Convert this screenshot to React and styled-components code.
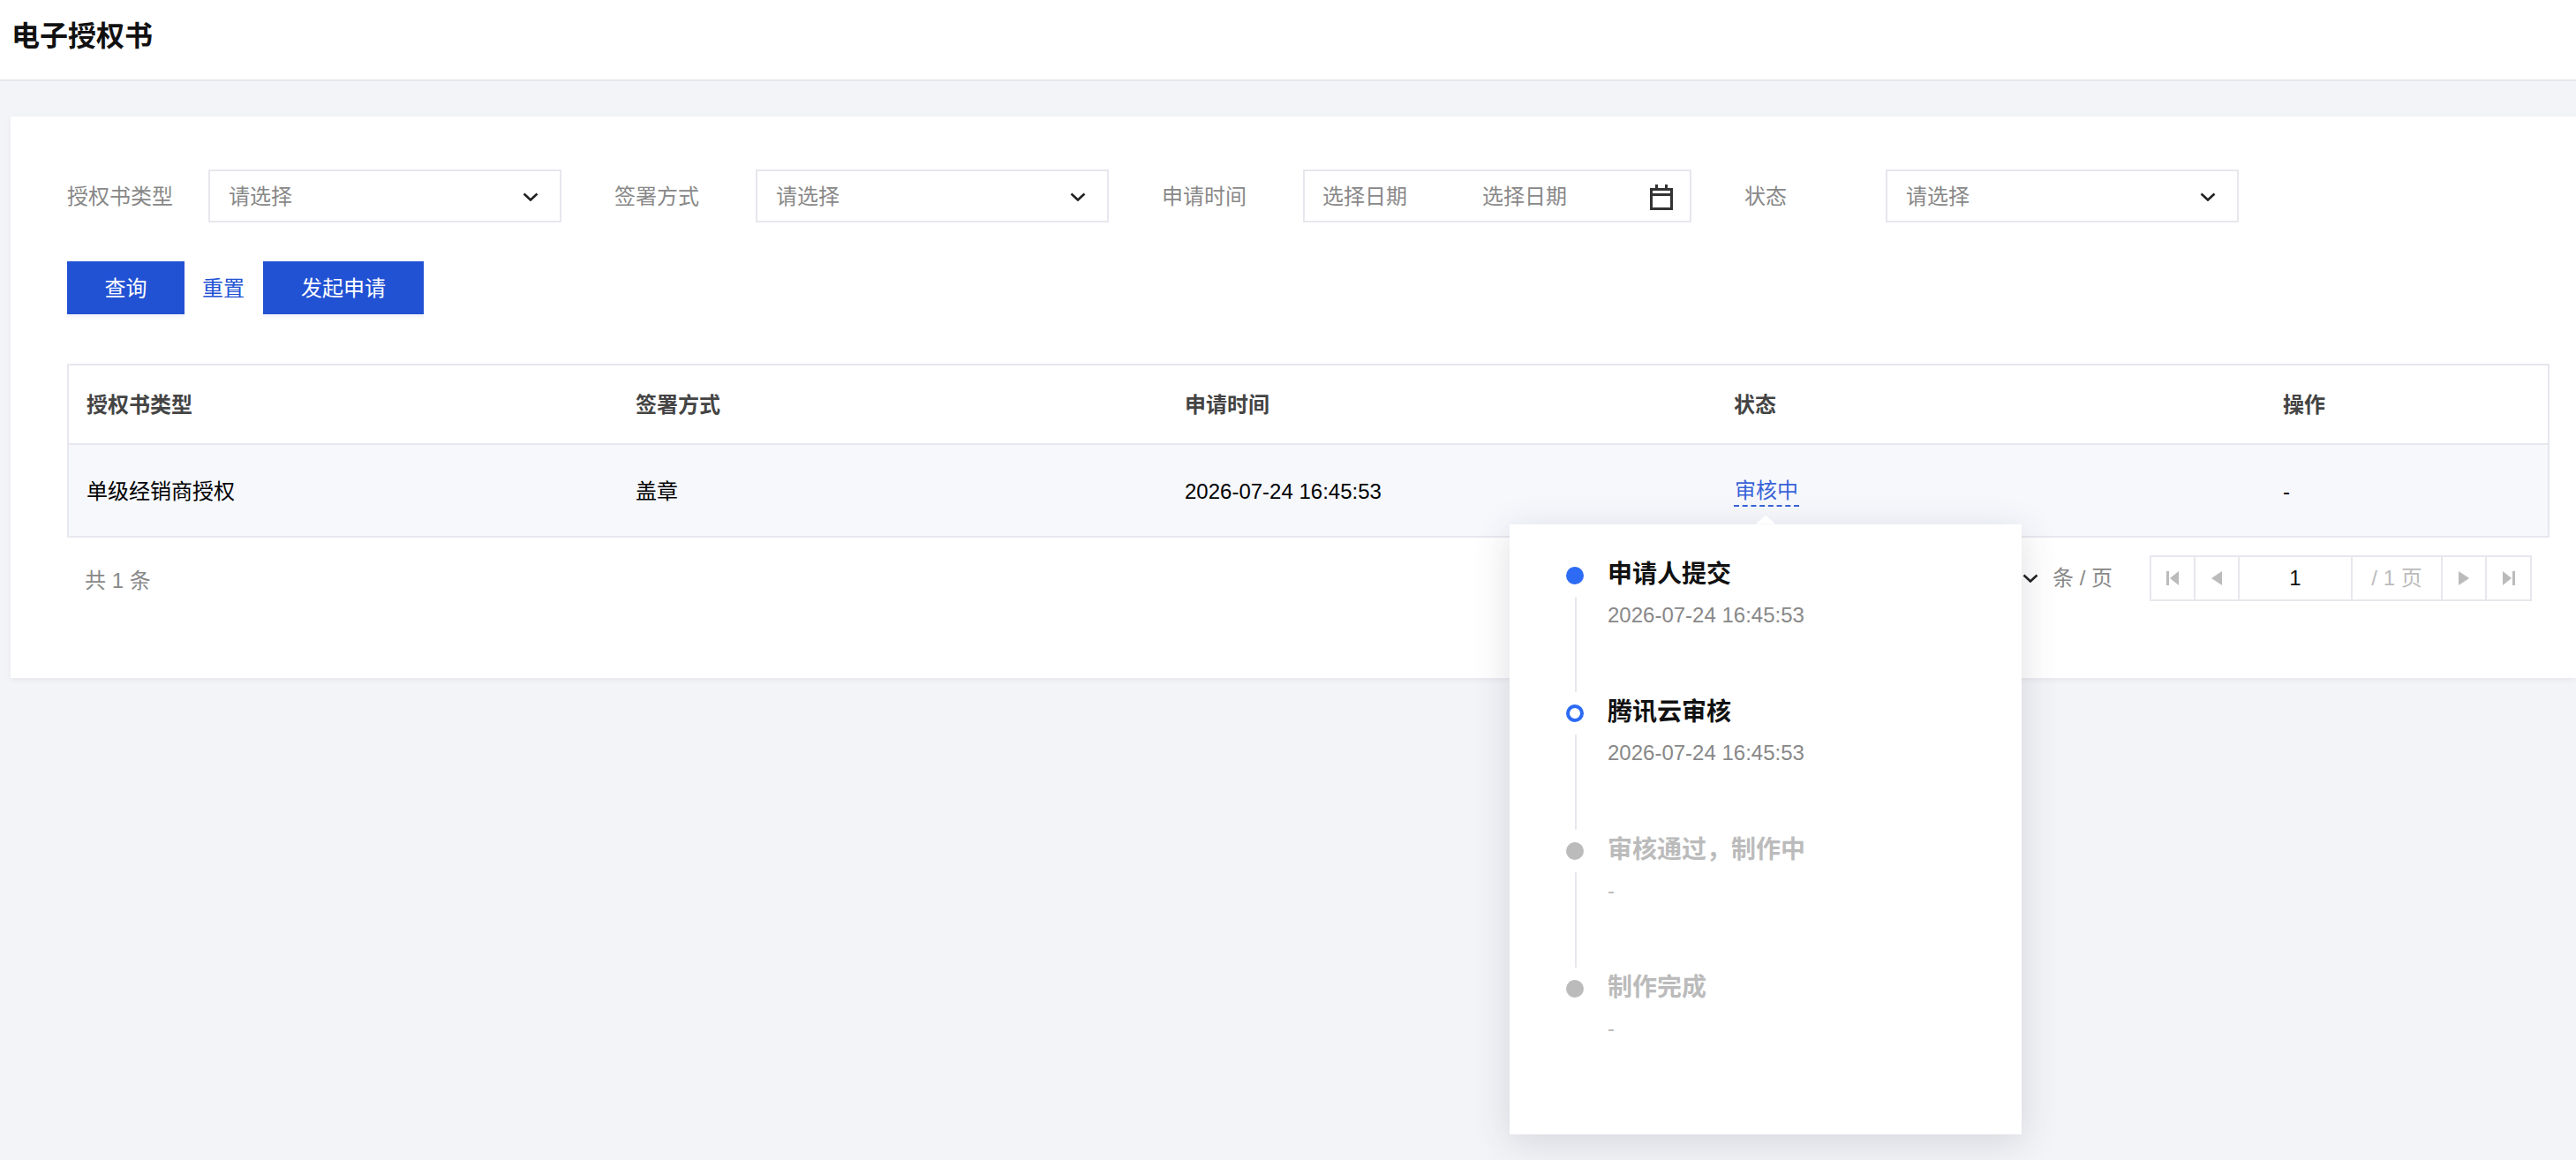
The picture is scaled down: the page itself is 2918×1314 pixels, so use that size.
import React from "react";
import styled, { createGlobalStyle } from "styled-components";

const Global = createGlobalStyle`
  html, body { margin: 0; padding: 0; background: #f3f4f7; overflow: hidden; }
  body {
    font-family: "Liberation Sans", "Noto Sans CJK SC", sans-serif;
    font-size: 24px;
    line-height: 32px;
    color: #000;
  }
  * { box-sizing: border-box; }
`;

const Page = styled.div`
  width: 2918px;
  min-height: 1314px;
  background: #f3f4f7;
`;
const Header = styled.header`
  height: 92px;
  padding-left: 13px;
  display: flex;
  align-items: center;
  background: #fff;
  border-bottom: 2px solid #e7e8ee;
`;
const Title = styled.h1`
  margin: 0 0 8px;
  font-size: 32px;
  line-height: 44px;
  font-weight: 700;
  color: #111;
`;
const Card = styled.section`
  margin: 40px 0 0 12px;
  padding: 60px 30px 87px 64px;
  background: #fff;
  box-shadow: 0 2px 6px rgba(54, 58, 80, 0.06);
`;
const Filters = styled.div`
  display: flex;
  align-items: center;
  gap: 60px;
`;
const Field = styled.div`
  display: flex;
  align-items: center;
`;
const Label = styled.label`
  width: 160px;
  padding-top: 2px;
  color: #888;
`;
const Select = styled.div`
  width: 400px;
  height: 60px;
  padding: 2px 24px 0 21px;
  display: flex;
  align-items: center;
  justify-content: space-between;
  border: 2px solid #e7e8ee;
  color: #888;
  background: #fff;
`;
const DateRange = styled(Select)`
  width: 440px;
  padding: 2px 19px 0 20px;
`;
const DateText = styled.span`
  width: 181px;
`;
const DateTexts = styled.div`
  display: flex;
`;
const Actions = styled.div`
  margin-top: 44px;
  display: flex;
  align-items: center;
`;
const Primary = styled.button`
  width: ${(p) => p.$w}px;
  height: 60px;
  padding: 2px 0 0;
  border: 0;
  border-radius: 0;
  background: #2252d4;
  color: #fff;
  font: inherit;
  box-shadow: 0 4px 0 #f7f7fd;
`;
const Link = styled.a`
  margin: 0 21px 0 20px;
  padding-top: 2px;
  color: #2252d4;
`;
const Table = styled.div`
  margin-top: 56px;
  width: 2812px;
  border: 2px solid #e7e8ee;
`;
const Row = styled.div`
  display: grid;
  grid-template-columns: repeat(4, 622px) 1fr;
  align-items: center;
  padding: ${(p) => p.$pt}px 0 0 20px;
  height: ${(p) => p.$h}px;
  background: ${(p) => p.$bg};
  color: ${(p) => p.$color};
  font-weight: ${(p) => p.$weight};
  border-bottom: ${(p) => (p.$line ? "2px solid #e7e8ee" : "0")};
`;
const Status = styled.span`
  position: relative;
  display: inline-block;
  padding: 0 1px;
  color: #3a63d8;
  border-bottom: 2px dashed #3a63d8;
`;
const Popover = styled.div`
  position: absolute;
  top: calc(100% + 22px);
  left: 50%;
  transform: translateX(-50%);
  margin-left: -1px;
  width: 580px;
  padding: 36px 0 104px 64px;
  background: #fff;
  box-shadow: 0 8px 40px rgba(54, 58, 80, 0.16);
  &::before {
    content: "";
    position: absolute;
    top: -10px;
    left: 50%;
    margin-left: -11px;
    width: 22px;
    height: 10px;
    background: #fff;
    clip-path: polygon(50% 0, 100% 100%, 0 100%);
  }
`;
const Step = styled.div`
  display: flex;
  gap: 27px;
`;
const Rail = styled.div`
  width: 20px;
  padding-top: 12px;
  flex: none;
`;
const Dot = styled.div`
  width: 20px;
  height: 20px;
  border-radius: 50%;
  background: ${(p) => (p.$state === "hollow" ? "#fff" : p.$state === "done" ? "#2d6bf5" : "#bbb")};
  border: ${(p) => (p.$state === "hollow" ? "4px solid #2d6bf5" : "0")};
`;
const RailLine = styled.div`
  width: 2px;
  height: 108px;
  margin: 14px 0 2px 10px;
  background: #e7e8ee;
`;
const StepBody = styled.div`
  padding-top: 1px;
`;
const StepTitle = styled.div`
  font-size: 28px;
  line-height: 40px;
  font-weight: 700;
  white-space: nowrap;
  color: ${(p) => (p.$muted ? "#bbb" : "#111")};
`;
const StepTime = styled.div`
  margin-top: 10px;
  font-weight: 400;
  color: ${(p) => (p.$muted ? "#bbb" : "#888")};
`;
const Footer = styled.div`
  width: 2812px;
  padding: 20px 20px 0;
  display: flex;
  align-items: center;
  justify-content: space-between;
`;
const Total = styled.span`
  padding-top: 6px;
  color: #888;
`;
const FooterRight = styled.div`
  display: flex;
  align-items: center;
`;
const PerPage = styled.span`
  margin: 0 42px 0 16px;
  color: #888;
`;
const Pager = styled.div`
  height: 52px;
  display: flex;
  border: 2px solid #e7e8ee;
`;
const PageCell = styled.div`
  width: ${(p) => p.$w}px;
  display: flex;
  align-items: center;
  justify-content: center;
  border-right: ${(p) => (p.$last ? "0" : "2px solid #e7e8ee")};
  color: ${(p) => p.$color || "#bbb"};
`;
const Chevron = styled.svg`
  display: block;
  flex: none;
`;

const Arrow = () => (
  <Chevron width="18" height="10" viewBox="0 0 18 10">
    <polyline points="1.5,1.5 9,8.5 16.5,1.5" fill="none" stroke="#222" strokeWidth="2.6" />
  </Chevron>
);

const Calendar = () => (
  <svg width="26" height="29" viewBox="0 0 26 29" style={{ display: "block" }}>
    <g fill="#333">
      <rect x="6" y="0" width="3" height="5" />
      <rect x="17" y="0" width="3" height="5" />
      <path fillRule="evenodd" d="M0 4h26v25H0zM3 7v3h20V7zM3 13v13h20V13z" />
    </g>
  </svg>
);

const PageIcon = ({ kind }) => {
  const shapes = {
    first: "M0 0h3v16H0zM14 0v16L4 8z",
    prev: "M13 0v16L1 8z",
    next: "M1 0v16l12-8z",
    last: "M14 0h-3v16h3zM0 0v16l10-8z",
  };
  return (
    <svg width="14" height="16" viewBox="0 0 14 16" style={{ display: "block" }}>
      <path d={shapes[kind]} fill="#bbb" />
    </svg>
  );
};

const steps = [
  { title: "申请人提交", time: "2026-07-24 16:45:53", state: "done" },
  { title: "腾讯云审核", time: "2026-07-24 16:45:53", state: "hollow" },
  { title: "审核通过\uFF0C制作中", time: "-", state: "todo" },
  { title: "制作完成", time: "-", state: "todo" },
];

export default function App() {
  return (
    <Page>
      <Global />
      <Header>
        <Title>电子授权书</Title>
      </Header>
      <Card>
        <Filters>
          <Field>
            <Label>授权书类型</Label>
            <Select>
              请选择
              <Arrow />
            </Select>
          </Field>
          <Field>
            <Label>签署方式</Label>
            <Select>
              请选择
              <Arrow />
            </Select>
          </Field>
          <Field>
            <Label>申请时间</Label>
            <DateRange>
              <DateTexts>
                <DateText>选择日期</DateText>
                <DateText>选择日期</DateText>
              </DateTexts>
              <Calendar />
            </DateRange>
          </Field>
          <Field>
            <Label>状态</Label>
            <Select>
              请选择
              <Arrow />
            </Select>
          </Field>
        </Filters>
        <Actions>
          <Primary $w={133}>查询</Primary>
          <Link>重置</Link>
          <Primary $w={182}>发起申请</Primary>
        </Actions>
        <Table>
          <Row $h={90} $pt={1} $line $bg="#fff" $color="#444" $weight={700}>
            <span>授权书类型</span>
            <span>签署方式</span>
            <span>申请时间</span>
            <span>状态</span>
            <span>操作</span>
          </Row>
          <Row $h={103} $pt={2} $bg="#f6f8fc" $color="#000" $weight={400}>
            <span>单级经销商授权</span>
            <span>盖章</span>
            <span>2026-07-24 16:45:53</span>
            <div>
              <Status>
                审核中
                <Popover>
                  {steps.map((s, i) => (
                    <Step key={s.title}>
                      <Rail>
                        <Dot $state={s.state} />
                        {i < steps.length - 1 && <RailLine />}
                      </Rail>
                      <StepBody>
                        <StepTitle $muted={s.state === "todo"}>{s.title}</StepTitle>
                        <StepTime $muted={s.state === "todo"}>{s.time}</StepTime>
                      </StepBody>
                    </Step>
                  ))}
                </Popover>
              </Status>
            </div>
            <span>-</span>
          </Row>
        </Table>
        <Footer>
          <Total>共 1 条</Total>
          <FooterRight>
            <Arrow />
            <PerPage>条 / 页</PerPage>
            <Pager>
              <PageCell $w={50}><PageIcon kind="first" /></PageCell>
              <PageCell $w={50}><PageIcon kind="prev" /></PageCell>
              <PageCell $w={128} $color="#111">1</PageCell>
              <PageCell $w={102}>/ 1 页</PageCell>
              <PageCell $w={50}><PageIcon kind="next" /></PageCell>
              <PageCell $w={49} $last><PageIcon kind="last" /></PageCell>
            </Pager>
          </FooterRight>
        </Footer>
      </Card>
    </Page>
  );
}
